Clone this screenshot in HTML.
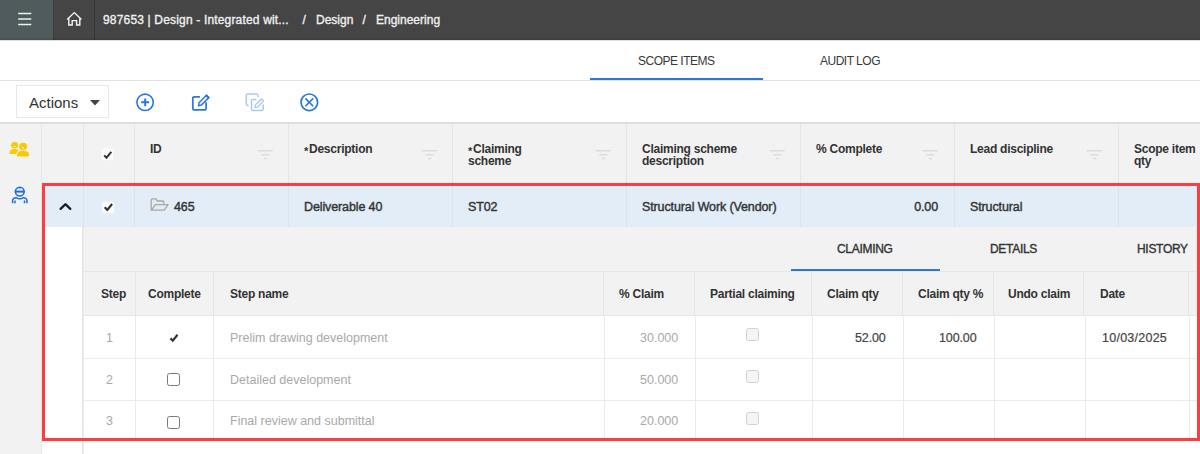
<!DOCTYPE html>
<html><head><meta charset="utf-8">
<style>
*{box-sizing:border-box;margin:0;padding:0}
html,body{width:1200px;height:454px;overflow:hidden;background:#fff;font-family:"Liberation Sans",sans-serif;color:#333}
.a{position:absolute}
.t{position:absolute;white-space:pre;line-height:20px}
.vl{position:absolute;width:1px;background:#e5e5e5}
.hl{position:absolute;height:1px;background:#e3e3e3}
.hd{font-size:12px;font-weight:700;letter-spacing:-0.25px;color:#333}
.rd{font-size:12.5px;letter-spacing:-0.12px;color:#333;-webkit-text-stroke:0.4px #333}
.gy{font-size:12.5px;color:#a9a9a9}
.ast{position:relative;top:1.5px;font-size:11px;margin-right:1px}
.filt{position:absolute;width:16px;height:11px}
</style></head><body>

<!-- top bar -->
<div class="a" style="left:0;top:0;width:1200px;height:40px;background:#454545"></div>
<div class="a" style="left:0;top:0;width:53px;height:40px;background:#4e5a5b"></div>
<div class="a" style="left:53px;top:0;width:1px;height:40px;background:#3c3c3c"></div>
<div class="a" style="left:94px;top:0;width:1px;height:40px;background:#383838"></div>
<div class="a" style="left:0;top:38px;width:1200px;height:2px;background:rgba(0,0,0,0.08)"></div>
<!-- hamburger -->
<svg class="a" style="left:0;top:0" width="53" height="40" viewBox="0 0 53 40"><path d="M18.2 13.6 H31.3 M18.2 19 H31.3 M18.2 24.4 H31.3" stroke="#f0f0f0" stroke-width="1.5"/></svg>
<!-- home -->
<svg class="a" style="left:0;top:0" width="94" height="40" viewBox="0 0 94 40"><path d="M67.6 19 L74.3 12.6 L81 19 M68.8 17.8 V25 H72.2 V20.6 H76.6 V25 H79.8 V17.8" fill="none" stroke="#f5f5f5" stroke-width="1.4" stroke-linejoin="miter" stroke-linecap="round"/></svg>
<div class="t" style="left:103px;top:10px;font-size:12px;letter-spacing:0.17px;color:#f0f0f0;-webkit-text-stroke:0.35px #f0f0f0">987653 | Design - Integrated wit...</div>
<div class="t" style="left:302.5px;top:10px;font-size:12px;color:#f0f0f0;-webkit-text-stroke:0.35px #f0f0f0">/</div>
<div class="t" style="left:316px;top:10px;font-size:12px;letter-spacing:0px;color:#f0f0f0;-webkit-text-stroke:0.35px #f0f0f0">Design</div>
<div class="t" style="left:362.5px;top:10px;font-size:12px;color:#f0f0f0;-webkit-text-stroke:0.35px #f0f0f0">/</div>
<div class="t" style="left:376px;top:10px;font-size:12px;letter-spacing:0px;color:#f0f0f0;-webkit-text-stroke:0.35px #f0f0f0">Engineering</div>

<!-- tabs -->
<div class="a" style="left:0;top:40px;width:1200px;height:1px;background:rgba(0,0,0,0.12)"></div>
<div class="t" style="left:638px;top:51px;font-size:12px;letter-spacing:-0.5px;color:#383838">SCOPE ITEMS</div>
<div class="t" style="left:820px;top:51px;font-size:12px;letter-spacing:-0.5px;color:#383838">AUDIT LOG</div>
<div class="a" style="left:0;top:80px;width:1200px;height:1px;background:#e2e2e2"></div>
<div class="a" style="left:590px;top:78px;width:173px;height:2px;background:#2f78d0"></div>

<!-- toolbar -->
<div class="a" style="left:16px;top:85px;width:93px;height:33px;border:1px solid #e8e8e8;background:#fff"></div>
<div class="t" style="left:29px;top:93px;font-size:15px;color:#333">Actions</div>
<svg class="a" style="left:90px;top:100px" width="10" height="6" viewBox="0 0 10 6"><path d="M0 0 H10 L5 5.5 Z" fill="#444"/></svg>
<!-- plus circle -->
<svg class="a" style="left:135px;top:92px" width="21" height="21" viewBox="0 0 21 21">
<circle cx="10.1" cy="10.3" r="8.2" fill="none" stroke="#2b79d6" stroke-width="1.6"/>
<path d="M6.2 10.3 H14.2 M10.2 6.4 V14.3" stroke="#2b79d6" stroke-width="2"/>
</svg>
<!-- edit -->
<svg class="a" style="left:190px;top:92px" width="21" height="21" viewBox="0 0 21 21">
<path d="M9.9 4.8 H4.5 Q2.8 4.8 2.8 6.5 V16.2 Q2.8 17.9 4.5 17.9 H14.4 Q16.1 17.9 16.1 16.2 V10.3" fill="none" stroke="#2b79d6" stroke-width="1.7"/>
<path d="M8.5 13.8 L9 10.8 L16.5 3.3 L18.8 5.6 L11.3 13.1 Z" fill="none" stroke="#2b79d6" stroke-width="1.5" stroke-linejoin="round"/>
<path d="M16.5 2.3 L19.8 5.6 L18.5 6.9 L15.2 3.6 Z" fill="#2b79d6"/>
</svg>
<!-- copy edit (disabled) -->
<svg class="a" style="left:244px;top:92px" width="22" height="21" viewBox="0 0 22 21">
<path d="M4.6 13.6 H3.8 Q2.3 13.6 2.3 12.1 V3.5 Q2.3 2 3.8 2 H12.5 Q14 2 14 3.5 V5" fill="none" stroke="#a9c9f0" stroke-width="1.5"/>
<path d="M12.3 7.5 H9 Q7.5 7.5 7.5 9 V17.1 Q7.5 18.6 9 18.6 H17.7 Q19.2 18.6 19.2 17.1 V12.5" fill="none" stroke="#a9c9f0" stroke-width="1.5"/>
<path d="M11 15.5 L11.4 13 L17.5 7 L19.6 9 L13.5 15.1 Z" fill="none" stroke="#a9c9f0" stroke-width="1.4" stroke-linejoin="round"/>
</svg>
<!-- x circle -->
<svg class="a" style="left:299px;top:92px" width="21" height="21" viewBox="0 0 21 21">
<circle cx="10.3" cy="10.3" r="8.3" fill="none" stroke="#2b79d6" stroke-width="1.7"/>
<path d="M6.4 6.4 L14.2 14.2 M14.2 6.4 L6.4 14.2" stroke="#2b79d6" stroke-width="1.6"/>
</svg>

<!-- grid area -->
<div class="a" style="left:0;top:122px;width:1200px;height:332px;background:#fff"></div>

<div class="a" style="left:0;top:122px;width:41px;height:332px;background:#f2f2f2"></div>
<div class="a" style="left:41px;top:122px;width:1159px;height:61px;background:#f2f2f2"></div>
<div class="vl" style="left:41px;top:122px;height:332px;background:#e6e6e6"></div>

<!-- header separators -->
<div class="vl" style="left:83px;top:122px;height:61px"></div>
<div class="vl" style="left:134px;top:122px;height:61px"></div>
<div class="vl" style="left:288px;top:122px;height:61px"></div>
<div class="vl" style="left:452px;top:122px;height:61px"></div>
<div class="vl" style="left:626px;top:122px;height:61px"></div>
<div class="vl" style="left:800px;top:122px;height:61px"></div>
<div class="vl" style="left:954px;top:122px;height:61px"></div>
<div class="vl" style="left:1118px;top:122px;height:61px"></div>


<div class="a" style="left:0;top:122px;width:1200px;height:2px;background:linear-gradient(#d6d6d6,#e4e4e4)"></div>
<!-- sidebar icons -->
<svg class="a" style="left:0;top:130px" width="41" height="40" viewBox="0 130 41 40">
<g fill="#fdc800">
<ellipse cx="14.6" cy="145.3" rx="3.5" ry="3.3"/>
<path d="M9.6 154 V152 C9.6 150 11.5 148.9 14.4 148.9 C17.3 148.9 19.1 150 19.1 152 V154 Z"/>
</g>
<g fill="#f2f2f2" stroke="#f2f2f2" stroke-width="1.6"><ellipse cx="23.1" cy="146.4" rx="4" ry="3.6"/><path d="M17.1 156.4 V154.2 C17.1 152 19.2 150.8 23 150.8 C26.8 150.8 29 152 29 154.2 V156.4 Z"/></g>
<g fill="#fdc800">
<ellipse cx="23.1" cy="146.4" rx="4" ry="3.6"/>
<path d="M17.1 156.4 V154.2 C17.1 152 19.2 150.8 23 150.8 C26.8 150.8 29 152 29 154.2 V156.4 Z"/>
</g>
<g fill="#fff" opacity="0.85"><rect x="13.6" y="146" width="2" height="1"/><rect x="22.1" y="147.2" width="2" height="1.2"/></g>
</svg>
<svg class="a" style="left:0;top:180px" width="41" height="30" viewBox="0 180 41 30">
<g fill="none" stroke="#1f6fd8" stroke-width="1.5">
<circle cx="19.75" cy="191.6" r="4.4"/>
<path d="M14.8 191.6 H24.7" stroke-width="2"/>
<path d="M12.6 203.3 V200.5 C12.6 198.6 14.5 197.6 16.5 197.8 C18 199.2 21.5 199.2 23 197.8 C25 197.6 26.9 198.6 26.9 200.5 V203.3"/>
<path d="M15 200.5 V203.3 M24.5 200.5 V203.3"/>
</g>
<path d="M18.8 188.4 L19.75 187 L20.7 188.4 Z" fill="#1f6fd8"/>
</svg>

<!-- header texts -->
<svg class="a" style="left:101px;top:148px" width="14" height="14" viewBox="0 0 14 14"><rect x="0.7" y="0.4" width="11.6" height="11.9" rx="2.5" fill="#fcfcfc"/><path d="M3.2 7.4 L5.5 9.7 L10.3 3.9" fill="none" stroke="#333" stroke-width="2"/></svg>
<div class="t hd" style="left:150px;top:139px">ID</div>
<div class="t hd" style="left:304px;top:139px"><span class="ast">*</span>Description</div>
<div class="t hd" style="left:468px;top:139px;line-height:11.5px;top:144px"><span class="ast">*</span>Claiming<br>scheme</div>
<div class="t hd" style="left:642px;top:144px;line-height:11.5px">Claiming scheme<br>description</div>
<div class="t hd" style="left:816px;top:139px">% Complete</div>
<div class="t hd" style="left:970px;top:139px">Lead discipline</div>
<div class="t hd" style="left:1134px;top:144px;line-height:11.5px">Scope item<br>qty</div>

<!-- filter icons -->
<svg class="filt" style="left:257px;top:149px" viewBox="0 0 16 11"><path d="M0.7 1.8 H15.7 M4.2 5.8 H12.4 M6.9 9.5 H10.2" stroke="#dcdcdc" stroke-width="1.6"/></svg>
<svg class="filt" style="left:421px;top:149px" viewBox="0 0 16 11"><path d="M0.7 1.8 H15.7 M4.2 5.8 H12.4 M6.9 9.5 H10.2" stroke="#dcdcdc" stroke-width="1.6"/></svg>
<svg class="filt" style="left:595px;top:149px" viewBox="0 0 16 11"><path d="M0.7 1.8 H15.7 M4.2 5.8 H12.4 M6.9 9.5 H10.2" stroke="#dcdcdc" stroke-width="1.6"/></svg>
<svg class="filt" style="left:769px;top:149px" viewBox="0 0 16 11"><path d="M0.7 1.8 H15.7 M4.2 5.8 H12.4 M6.9 9.5 H10.2" stroke="#dcdcdc" stroke-width="1.6"/></svg>
<svg class="filt" style="left:922px;top:149px" viewBox="0 0 16 11"><path d="M0.7 1.8 H15.7 M4.2 5.8 H12.4 M6.9 9.5 H10.2" stroke="#dcdcdc" stroke-width="1.6"/></svg>
<svg class="filt" style="left:1086px;top:149px" viewBox="0 0 16 11"><path d="M0.7 1.8 H15.7 M4.2 5.8 H12.4 M6.9 9.5 H10.2" stroke="#dcdcdc" stroke-width="1.6"/></svg>

<!-- selected row -->
<div class="a" style="left:45px;top:186px;width:1152px;height:41px;background:#e3edf8"></div>
<div class="vl" style="left:83px;top:186px;height:41px;background:#dbe4ee"></div>
<div class="vl" style="left:134px;top:186px;height:41px;background:#dbe4ee"></div>
<div class="vl" style="left:288px;top:186px;height:41px;background:#dbe4ee"></div>
<div class="vl" style="left:452px;top:186px;height:41px;background:#dbe4ee"></div>
<div class="vl" style="left:626px;top:186px;height:41px;background:#dbe4ee"></div>
<div class="vl" style="left:800px;top:186px;height:41px;background:#dbe4ee"></div>
<div class="vl" style="left:954px;top:186px;height:41px;background:#dbe4ee"></div>
<div class="vl" style="left:1118px;top:186px;height:41px;background:#dbe4ee"></div>
<svg class="a" style="left:58px;top:201px" width="15" height="11" viewBox="0 0 15 11"><path d="M2.6 7.9 L7.4 3.2 L12.3 7.9" fill="none" stroke="#1e1e1e" stroke-width="2.3" stroke-linecap="round" stroke-linejoin="round"/></svg>
<svg class="a" style="left:101px;top:201px" width="14" height="14" viewBox="0 0 14 14"><rect x="1.2" y="0.6" width="12.1" height="11.3" rx="2" fill="#fbfcfd"/><path d="M3.7 6.2 L6.3 8.9 L11.1 3" fill="none" stroke="#333" stroke-width="2.2"/></svg>
<svg class="a" style="left:150px;top:197px" width="20" height="15" viewBox="0 0 20 15">
<path d="M1.2 13.1 V3.4 Q1.2 1.8 2.8 1.8 H5.8 L7.4 4 H12.3 Q13.9 4 13.9 5.6 V6.9" fill="none" stroke="#aaa7a4" stroke-width="1.3" stroke-linejoin="round" stroke-linecap="round"/>
<path d="M1.4 13.1 L5.4 7.6 H18.1 L14.2 13.1 Z" fill="none" stroke="#aaa7a4" stroke-width="1.3" stroke-linejoin="round"/>
</svg>
<div class="t rd" style="left:174px;top:197px">465</div>
<div class="t rd" style="left:304px;top:197px">Deliverable 40</div>
<div class="t rd" style="left:468px;top:197px">ST02</div>
<div class="t rd" style="left:642px;top:197px">Structural Work (Vendor)</div>
<div class="t rd" style="left:837px;top:197px;width:101px;text-align:right">0.00</div>
<div class="t rd" style="left:970px;top:197px">Structural</div>

<!-- detail panel -->
<div class="a" style="left:45px;top:227px;width:38px;height:211px;background:#fff"></div>
<div class="a" style="left:83px;top:227px;width:1114px;height:89px;background:#f2f2f2"></div>
<div class="vl" style="left:82px;top:227px;height:227px;background:#e3e3e3"></div><div class="vl" style="left:83px;top:227px;height:227px;background:#ececec"></div>
<div class="t" style="left:837px;top:239px;font-size:12px;letter-spacing:-0.3px;color:#333;-webkit-text-stroke:0.35px #333">CLAIMING</div>
<div class="t" style="left:990px;top:239px;font-size:12px;letter-spacing:-0.3px;color:#333;-webkit-text-stroke:0.35px #333">DETAILS</div>
<div class="t" style="left:1137px;top:239px;font-size:12px;letter-spacing:-0.3px;color:#333;-webkit-text-stroke:0.35px #333">HISTORY</div>
<div class="a" style="left:791px;top:269px;width:149px;height:2px;background:#2f78d0"></div>
<div class="hl" style="left:83px;top:271px;width:1114px;background:#ebe6e6"></div>

<!-- detail header seps -->
<div class="vl" style="left:135px;top:272px;height:44px;background:#e6e6e6"></div>
<div class="vl" style="left:213px;top:272px;height:44px;background:#e6e6e6"></div>
<div class="vl" style="left:603px;top:272px;height:44px;background:#e6e6e6"></div>
<div class="vl" style="left:694px;top:272px;height:44px;background:#e6e6e6"></div>
<div class="vl" style="left:811px;top:272px;height:44px;background:#e6e6e6"></div>
<div class="vl" style="left:902px;top:272px;height:44px;background:#e6e6e6"></div>
<div class="vl" style="left:993px;top:272px;height:44px;background:#e6e6e6"></div>
<div class="vl" style="left:1083px;top:272px;height:44px;background:#e6e6e6"></div>
<div class="vl" style="left:1188px;top:272px;height:44px;background:#e6e6e6"></div>
<div class="vl" style="left:135px;top:316px;height:122px;background:#ebebeb"></div>
<div class="vl" style="left:213px;top:316px;height:122px;background:#ebebeb"></div>
<div class="vl" style="left:604px;top:316px;height:122px;background:#ebebeb"></div>
<div class="vl" style="left:695px;top:316px;height:122px;background:#ebebeb"></div>
<div class="vl" style="left:812px;top:316px;height:122px;background:#ebebeb"></div>
<div class="vl" style="left:903px;top:316px;height:122px;background:#ebebeb"></div>
<div class="vl" style="left:994px;top:316px;height:122px;background:#ebebeb"></div>
<div class="vl" style="left:1085px;top:316px;height:122px;background:#ebebeb"></div>
<div class="vl" style="left:1189px;top:316px;height:122px;background:#ebebeb"></div>

<div class="t hd" style="left:101px;top:284px">Step</div>
<div class="t hd" style="left:148px;top:284px">Complete</div>
<div class="t hd" style="left:230px;top:284px">Step name</div>
<div class="t hd" style="left:619px;top:284px">% Claim</div>
<div class="t hd" style="left:710px;top:284px">Partial claiming</div>
<div class="t hd" style="left:827px;top:284px">Claim qty</div>
<div class="t hd" style="left:918px;top:284px">Claim qty %</div>
<div class="t hd" style="left:1008px;top:284px">Undo claim</div>
<div class="t hd" style="left:1100px;top:284px">Date</div>

<div class="hl" style="left:83px;top:315px;width:1114px;background:#e8e8e8"></div>
<div class="hl" style="left:83px;top:358px;width:1114px;background:#ebebeb"></div>
<div class="hl" style="left:83px;top:400px;width:1114px;background:#ebebeb"></div>

<!-- row 1 -->
<div class="t gy" style="left:106px;top:328px">1</div>
<svg class="a" style="left:168px;top:332px" width="13" height="12" viewBox="0 0 13 12"><path d="M2.5 6.4 L4.8 8.7 L9.5 2.8" fill="none" stroke="#333" stroke-width="2.2"/></svg>
<div class="t gy" style="left:230px;top:328px">Prelim drawing development</div>
<div class="t gy" style="left:640px;top:328px">30.000</div>
<div class="a" style="left:746px;top:328px;width:13px;height:13px;border:1px solid #d3d3d3;border-radius:2.5px;background:#f5f5f5"></div>
<div class="t rd" style="left:855px;top:328px;-webkit-text-stroke:0.2px #444;color:#444">52.00</div>
<div class="t rd" style="left:939px;top:328px;-webkit-text-stroke:0.2px #444;color:#444">100.00</div>
<div class="t rd" style="left:1102px;top:328px;-webkit-text-stroke:0.2px #444;color:#444;letter-spacing:0.25px">10/03/2025</div>

<!-- row 2 -->
<div class="t gy" style="left:106px;top:370px">2</div>
<div class="a" style="left:167px;top:373px;width:13px;height:13px;border:1.5px solid #7a7a7a;border-radius:2.5px"></div>
<div class="t gy" style="left:230px;top:370px">Detailed development</div>
<div class="t gy" style="left:640px;top:370px">50.000</div>
<div class="a" style="left:746px;top:370px;width:13px;height:13px;border:1px solid #d3d3d3;border-radius:2.5px;background:#f5f5f5"></div>

<!-- row 3 -->
<div class="t gy" style="left:106px;top:411px">3</div>
<div class="a" style="left:167px;top:416px;width:13px;height:13px;border:1.5px solid #7a7a7a;border-radius:2.5px"></div>
<div class="t gy" style="left:230px;top:411px">Final review and submittal</div>
<div class="t gy" style="left:640px;top:411px">20.000</div>
<div class="a" style="left:746px;top:412px;width:13px;height:13px;border:1px solid #d3d3d3;border-radius:2.5px;background:#f5f5f5"></div>

<!-- red box -->
<div class="a" style="left:42px;top:183px;width:1158px;height:258px;border:3px solid #fc3e41"></div>

</body></html>
